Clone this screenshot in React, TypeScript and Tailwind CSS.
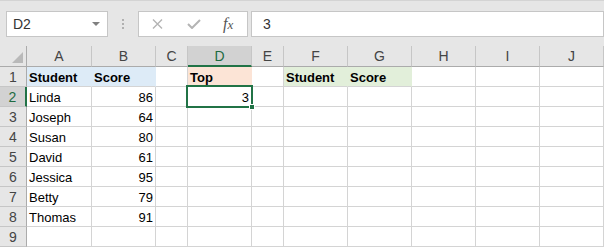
import React from "react";

type Cell = {
  text?: string;
  bold?: boolean;
  right?: boolean;
  fill?: string;
};

const columns = ["A", "B", "C", "D", "E", "F", "G", "H", "I", "J"];

const blue = "bg-[#ddebf7] border-r-[#ddebf7]";
const peach = "bg-[#fce4d6] border-r-[#fce4d6]";
const green = "bg-[#e2efda] border-r-[#e2efda]";

const students: [string, string][] = [
  ["Linda", "86"],
  ["Joseph", "64"],
  ["Susan", "80"],
  ["David", "61"],
  ["Jessica", "95"],
  ["Betty", "79"],
  ["Thomas", "91"],
];

function buildRows(): Cell[][] {
  const rows: Cell[][] = [];
  const first: Cell[] = columns.map(() => ({}));
  first[0] = { text: "Student", bold: true, fill: blue };
  first[1] = { text: "Score", bold: true, fill: blue };
  first[3] = { text: "Top", bold: true, fill: peach };
  first[5] = { text: "Student", bold: true, fill: green };
  first[6] = { text: "Score", bold: true, fill: green };
  rows.push(first);
  students.forEach(([name, score], i) => {
    const r: Cell[] = columns.map(() => ({}));
    r[0] = { text: name };
    r[1] = { text: score, right: true };
    if (i === 0) r[3] = { text: "3", right: true };
    rows.push(r);
  });
  rows.push(columns.map(() => ({})));
  return rows;
}

function Toolbar() {
  return (
    <div className="h-[46px] bg-[#e6e6e6] border-t border-[#d4d4d4] flex items-start pt-[10px]">
      <div className="ml-[6px] w-[102px] h-[26px] bg-white border border-[#c6c6c6] flex items-center pl-[6px] pr-[6px]">
        <span className="text-[14px] text-[#333] flex-1">D2</span>
        <svg width="8" height="4" viewBox="0 0 8 4" className="mr-[1px]">
          <path d="M0 0 L8 0 L4 4 Z" fill="#808080" />
        </svg>
      </div>
      <div className="w-[30px] h-[26px] flex flex-col items-center pt-[8px] gap-[2px]">
        <div className="w-[2px] h-[2px] bg-[#b0b0b0]" />
        <div className="w-[2px] h-[2px] bg-[#b0b0b0]" />
        <div className="w-[2px] h-[2px] bg-[#b0b0b0]" />
      </div>
      <div className="w-[110px] h-[26px] bg-white border border-[#c6c6c6] flex items-center pl-[13px]">
        <svg width="11" height="10" viewBox="0 0 11 10">
          <path d="M1 0.5 L10 9.5 M10 0.5 L1 9.5" stroke="#b4b4b4" strokeWidth="1.4" fill="none" />
        </svg>
        <svg width="14" height="10" viewBox="0 0 14 10" className="ml-[24px]">
          <path d="M1 5 L5 9 L13 1" stroke="#b4b4b4" strokeWidth="2" fill="none" />
        </svg>
        <span className="ml-[22px] font-['Liberation_Serif'] italic text-[#555] text-[16px] leading-none">
          f<span className="text-[13px]">x</span>
        </span>
      </div>
      <div className="ml-[3px] flex-1 h-[26px] bg-white border border-[#c6c6c6] flex items-center pl-[11px]">
        <span className="text-[14px] text-[#333]">3</span>
      </div>
    </div>
  );
}

export default function App() {
  const rows = buildRows();
  return (
    <div className="w-[604px] h-[247px] bg-white overflow-hidden relative font-['Liberation_Sans',sans-serif]">
      <Toolbar />
      <div className="grid grid-cols-[27px_65px_64px_32px_64px_32px_64px_64px_64px_64px_64px]">
        <div className="h-[21px] bg-[#e6e6e6] border-b border-r border-[#ababab] flex items-end justify-end pr-[3px] pb-[3px]">
          <svg width="11" height="11" viewBox="0 0 11 11">
            <path d="M11 0 L11 11 L0 11 Z" fill="#b9b9b9" />
          </svg>
        </div>
        {columns.map((c) =>
          c === "D" ? (
            <div
              key={c}
              className="h-[21px] bg-[#d2d2d2] border-b-2 border-b-[#217346] border-r border-r-[#c6c6c6] flex items-center justify-center text-[14px] text-[#1e6b41] pt-[1px]"
            >
              {c}
            </div>
          ) : (
            <div
              key={c}
              className="h-[21px] bg-[#e6e6e6] border-b border-b-[#ababab] border-r border-r-[#c6c6c6] flex items-center justify-center text-[14px] text-[#444]"
            >
              {c}
            </div>
          )
        )}
        {rows.map((row, ri) => (
          <React.Fragment key={ri}>
            <div
              className={
                ri === 1
                  ? "h-[20px] bg-[#d2d2d2] border-b border-b-[#c6c6c6] border-r-2 border-r-[#217346] flex justify-center text-[14px] text-[#1e6b41] leading-[19px] pt-[1px]"
                  : "h-[20px] bg-[#e6e6e6] border-b border-b-[#c6c6c6] border-r border-r-[#ababab] flex justify-center text-[14px] text-[#444] leading-[19px] pt-[1px]"
              }
            >
              {ri + 1}
            </div>
            {row.map((cell, ci) => (
              <div
                key={ci}
                className={`h-[20px] overflow-hidden border-b border-r border-[#d4d4d4] text-[13px] text-black leading-[19px] pt-[1px] flex ${
                  cell.right ? "justify-end pr-[2px]" : "justify-start pl-[2px]"
                } ${cell.bold ? "font-bold" : ""} ${cell.fill ?? ""}`}
              >
                {cell.text}
              </div>
            ))}
          </React.Fragment>
        ))}
      </div>
      <div className="absolute left-[186px] top-[85px] w-[67px] h-[23px] border-2 border-[#217346]" />
      <div className="absolute left-[249px] top-[104px] w-[6px] h-[6px] bg-[#217346] border border-white" />
    </div>
  );
}
